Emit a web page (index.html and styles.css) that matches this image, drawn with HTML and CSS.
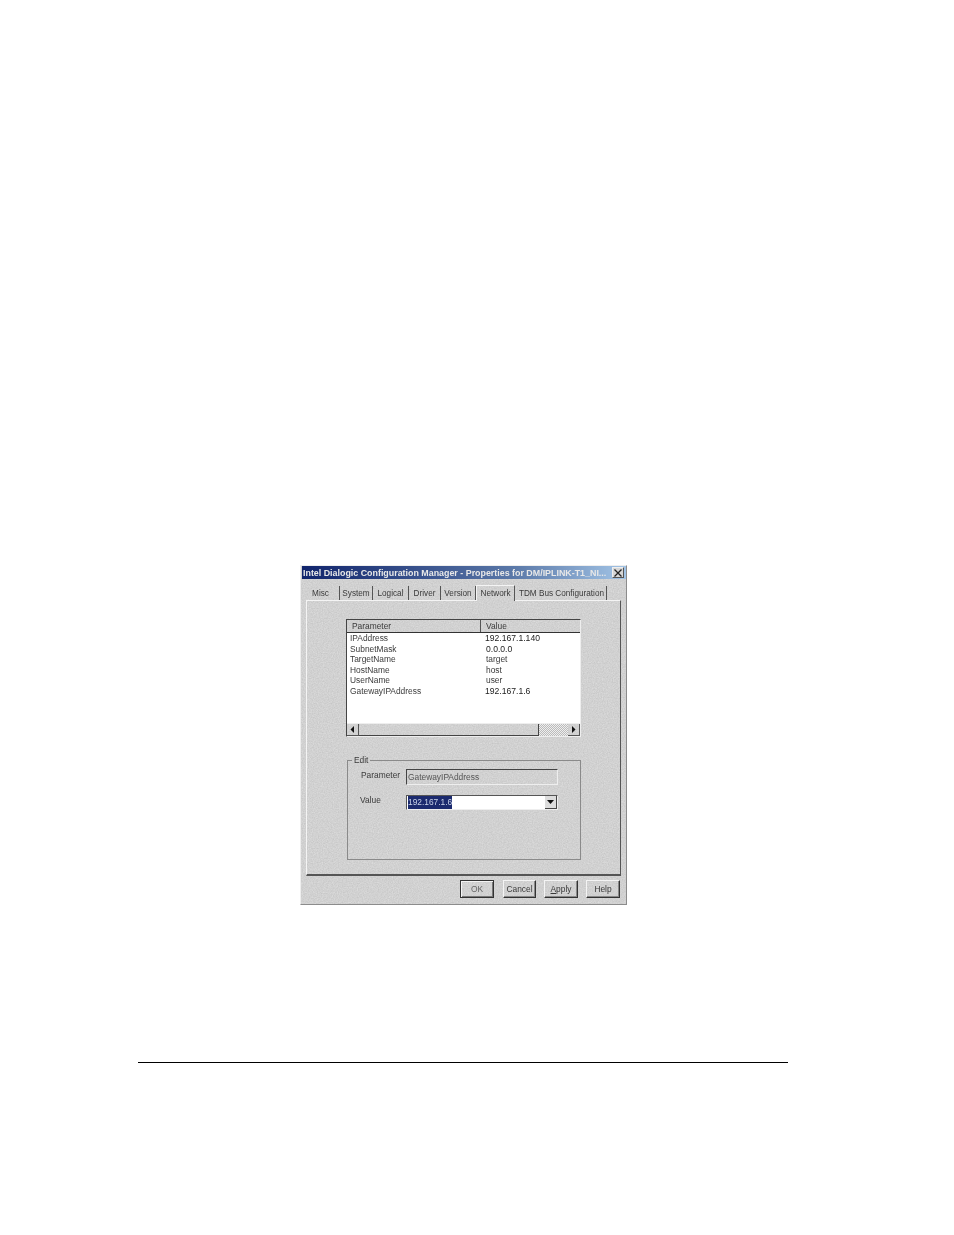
FILE: index.html
```html
<!DOCTYPE html>
<html lang="en">

<head>
  <meta charset="UTF-8">
  <title>Network properties</title>
  <link rel="stylesheet" href="styles.css">
</head>

<body>
  <div class='page'>
    <div class='dialog'>
      <div class='titlebar'>
        <span class='title'>Intel Dialogic Configuration Manager - Properties for DM/IPLINK-T1_NI...</span>
        <span class='close'>
          <svg width="8" height="8" viewBox="0 0 8 8"><path d="M0.5 0.5L7.5 7.5M7.5 0.5L0.5 7.5" stroke="#222" stroke-width="1.3" fill="none"/></svg>
        </span>
      </div>

      <div class='tabs'>
        <div class='tab t-misc'>Misc</div>
        <div class='tab t-system'>System</div>
        <div class='tab t-logical'>Logical</div>
        <div class='tab t-driver'>Driver</div>
        <div class='tab t-version'>Version</div>
        <div class='tab active'>Network</div>
        <div class='tab t-tdm'>TDM Bus Configuration</div>
      </div>

      <div class='panel'>
        <div class='list'>
          <div class='list-head'>
            <div class='col-a'>Parameter</div>
            <div class='col-b'>Value</div>
          </div>
          <div class='rows'>
            <div class='row'><span class='col-a'>IPAddress</span><span class='col-b big'>192.167.1.140</span></div>
            <div class='row'><span class='col-a'>SubnetMask</span><span class='col-b big off'>0.0.0.0</span></div>
            <div class='row'><span class='col-a'>TargetName</span><span class='col-b off'>target</span></div>
            <div class='row'><span class='col-a'>HostName</span><span class='col-b off'>host</span></div>
            <div class='row'><span class='col-a'>UserName</span><span class='col-b off'>user</span></div>
            <div class='row'><span class='col-a'>GatewayIPAddress</span><span class='col-b big'>192.167.1.6</span></div>
          </div>
          <div class='hscroll'>
            <span class='arrow'><svg width="5" height="7" viewBox="0 0 5 7"><path d="M4 0V7L0.5 3.5Z" fill="#111"/></svg></span>
            <span class='thumb'></span>
            <span class='track'></span>
            <span class='arrow'><svg width="5" height="7" viewBox="0 0 5 7"><path d="M1 0V7L4.5 3.5Z" fill="#111"/></svg></span>
          </div>
        </div>

        <div class='group'>
          <div class='legend'>Edit</div>
          <div class='field-row first'>
            <label class='lbl'>Parameter</label>
            <div class='readonly'>GatewayIPAddress</div>
          </div>
          <div class='field-row second'>
            <label class='lbl lbl-value'>Value</label>
            <div class='combo'>
              <span class='combo-text'><span class='sel'>192.167.1.6</span></span>
              <span class='drop'><svg width="7" height="4" viewBox="0 0 7 4"><path d="M0 0H7L3.5 4Z" fill="#111"/></svg></span>
            </div>
          </div>
        </div>
      </div>

      <div class='buttons'>
        <div class='btn b-ok default'>OK</div>
        <div class='btn b-cancel'>Cancel</div>
        <div class='btn b-apply'><span><u>A</u>pply</span></div>
        <div class='btn b-help'>Help</div>
      </div>
    </div>

    <div class='rule'></div>
  </div>
</body>
</html>
```

FILE: styles.css
```css
:root {
  --grain: url("data:image/svg+xml,%3Csvg xmlns='http://www.w3.org/2000/svg' width='240' height='240'%3E%3Cfilter id='n'%3E%3CfeTurbulence type='fractalNoise' baseFrequency='.8' numOctaves='2'/%3E%3CfeColorMatrix values='0 0 0 0 0 0 0 0 0 0 0 0 0 0 0 .14 0 0 0 -.02'/%3E%3C/filter%3E%3Crect width='240' height='240' filter='url(%23n)'/%3E%3C/svg%3E");
  --face: #dcdcdc;
}
html, body {
  margin: 0;
  background: #fff;
}
body {
  font-family: "Liberation Sans", Arial, sans-serif;
  font-size: 8.4px;
  color: #3a3a3a;
}
.page {
  height: 1235px;
  box-sizing: border-box;
  padding-top: 565px;
  overflow: hidden;
}
.dialog {
  width: 327px;
  height: 340px;
  margin-left: 300px;
  box-sizing: border-box;
  background: var(--face) var(--grain);
  border: 1px solid #8c8c8c;
  border-left-color: #eee;
  border-top-color: #eee;
  padding-left: 1px;
  filter: blur(0.45px);
}
.titlebar {
  height: 13px;
  display: flex;
  align-items: center;
  justify-content: space-between;
  padding: 0 2px 0 1px;
  background: linear-gradient(90deg, #10246c, #5a78a8 65%, #a2c4e6);
}
.title {
  color: #e8e8e8;
  font-weight: bold;
  font-size: 8.9px;
  white-space: nowrap;
}
.close {
  width: 12px;
  height: 11px;
  display: flex;
  align-items: center;
  justify-content: center;
  box-sizing: border-box;
  background: #d6d6d6;
  border: 1px solid #555;
  border-top-color: #eee;
  border-left-color: #eee;
}

.tabs {
  height: 21px;
  margin-left: 4px;
  display: flex;
  align-items: flex-end;
  padding-left: 1px;
  box-sizing: border-box;
  font-size: 8.2px;
}
.tab {
  height: 14px;
  line-height: 16px;
  text-align: center;
  box-sizing: border-box;
  border-right: 1px solid #555;
  white-space: nowrap;
}
.t-misc { width: 33px; padding-right: 5px; }
.t-system { width: 33px; }
.t-logical { width: 36px; }
.t-driver { width: 32px; }
.t-version { width: 35px; }
.t-tdm { width: 92px; padding-left: 2px; }
.tab.active {
  width: 39px;
  height: 16px;
  line-height: 15px;
  background: var(--face) var(--grain);
  border: 1px solid #f4f4f4;
  border-bottom: none;
  border-right-color: #555;
  margin-bottom: -1px;
  position: relative;
}

.panel {
  height: 276px;
  margin-left: 4px;
  width: 315px;
  box-sizing: border-box;
  border: 1px solid #f4f4f4;
  border-right-color: #555;
  border-bottom: 2px solid #555;
  padding: 18px 39px 0 39px;
}
.list {
  width: 235px;
  height: 118px;
  box-sizing: border-box;
  border: 1px solid #444;
  border-right-color: #eee;
  border-bottom-color: #eee;
  display: flex;
  flex-direction: column;
  background: #fff;
}
.list-head {
  height: 12px;
  line-height: 12px;
  display: flex;
  background: var(--face) var(--grain);
  border-bottom: 1px solid #333;
  flex-shrink: 0;
}
.list-head .col-a {
  width: 134px;
  padding-left: 5px;
  box-sizing: border-box;
  border-right: 1px solid #555;
}
.list-head .col-b {
  padding-left: 5px;
}
.rows {
  flex: 1;
}
.row {
  height: 10.6px;
  line-height: 10.6px;
  display: flex;
  white-space: nowrap;
}
.row .col-a {
  width: 138px;
  padding-left: 3px;
  box-sizing: border-box;
}
.row .col-b.big {
  font-size: 8.6px;
  color: #222;
}
.row .col-b.off {
  padding-left: 1px;
}
.hscroll {
  height: 12px;
  display: flex;
  flex-shrink: 0;
  background: var(--face) var(--grain);
  border-top: 1px solid #eee;
}
.arrow {
  width: 12px;
  display: flex;
  align-items: center;
  justify-content: center;
  box-sizing: border-box;
  border-right: 1px solid #555;
  border-bottom: 1px solid #555;
  flex-shrink: 0;
}
.thumb {
  width: 180px;
  box-sizing: border-box;
  border-right: 1px solid #444;
  border-bottom: 1px solid #444;
}
.track {
  flex: 1;
  background: repeating-conic-gradient(#eee 0 25%, #bbb 0 50%) 0 0 / 2px 2px;
}

.group {
  width: 234px;
  height: 100px;
  margin-top: 23px;
  margin-left: 1px;
  box-sizing: border-box;
  border: 1px solid #8a8a8a;
  padding: 8px 0 0 13px;
  position: relative;
}
.legend {
  position: absolute;
  top: -6px;
  left: 4px;
  padding: 0 2px;
  line-height: 11px;
  background: var(--face) var(--grain);
}
.field-row {
  display: flex;
}
.lbl {
  width: 45px;
  line-height: 11px;
  flex-shrink: 0;
}
.first .lbl {
  line-height: 13px;
}
.lbl-value {
  margin-left: -1px;
  width: 46px;
}
.readonly {
  width: 152px;
  height: 16px;
  line-height: 15px;
  box-sizing: border-box;
  padding-left: 1px;
  border: 1px solid #eee;
  border-top-color: #444;
  border-left-color: #444;
  color: #555;
}
.second {
  margin-top: 10px;
}
.combo {
  width: 152px;
  height: 15px;
  box-sizing: border-box;
  border: 1px solid #555;
  border-right-color: #eee;
  border-bottom-color: #eee;
  background: #fff;
  display: flex;
  justify-content: space-between;
}
.combo-text {
  line-height: 13px;
  padding-left: 1px;
}
.sel {
  display: inline-block;
  width: 44px;
  background: #1b2a6e;
  color: #c9d2e8;
}
.drop {
  width: 12px;
  display: flex;
  align-items: center;
  justify-content: center;
  box-sizing: border-box;
  background: var(--face);
  border-right: 1px solid #444;
  border-bottom: 1px solid #444;
}

.buttons {
  display: flex;
  justify-content: flex-end;
  padding: 4px 6px 0 0;
  gap: 8px;
}
.btn {
  height: 18px;
  line-height: 16px;
  text-align: center;
  box-sizing: border-box;
  border: 1px solid #333;
  border-top-color: #f4f4f4;
  border-left-color: #f4f4f4;
  box-shadow: inset -1px -1px 0 #888;
}
.b-ok { width: 34px; margin-right: 1px; }
.b-cancel { width: 33px; }
.b-apply { width: 34px; }
.b-help { width: 34px; }
.btn.default {
  border: 1px solid #333;
  box-shadow: inset 1px 1px 0 #f4f4f4, inset -1px -1px 0 #777;
  color: #666;
}

.rule {
  width: 650px;
  height: 1px;
  margin: 157px 0 0 138px;
  background: #000;
}
```
